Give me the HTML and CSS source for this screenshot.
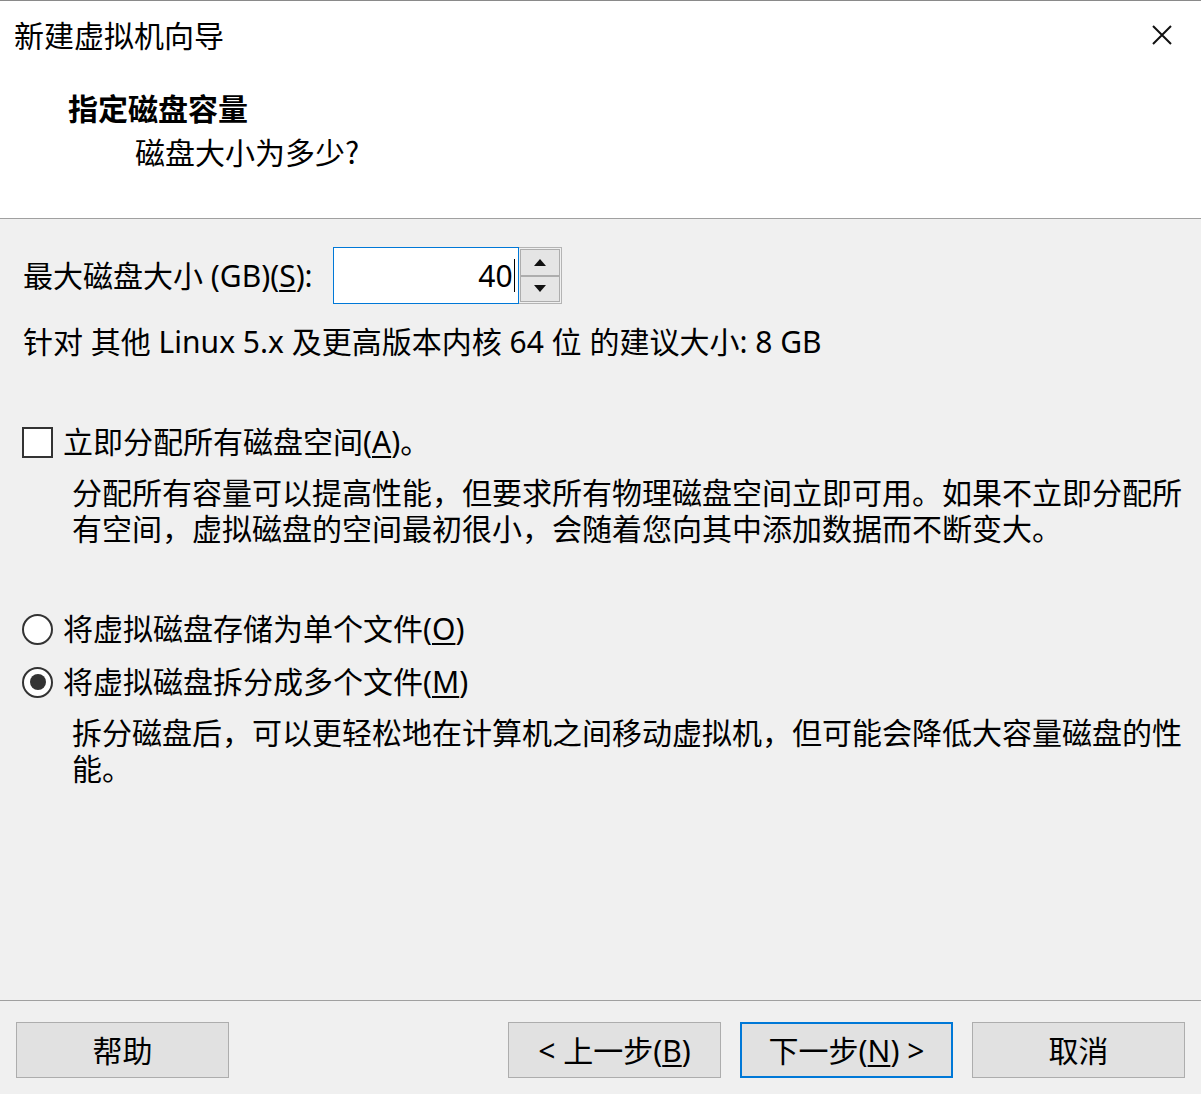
FILE: index.html
```html
<!DOCTYPE html>
<html lang="zh-CN">
<head>
<meta charset="utf-8">
<title>新建虚拟机向导</title>
<link rel="stylesheet" href="styles.css">
</head>
<body>
<div class="window">
  <div class="header">
    <div class="titlebar">
      <div class="title">新建虚拟机向导</div>
      <div class="close">
        <svg width="22" height="22" viewBox="0 0 22 22"><path d="M2 2 L20 20 M20 2 L2 20" stroke="#111" stroke-width="2" fill="none"/></svg>
      </div>
    </div>
    <div class="heading">指定磁盘容量</div>
    <div class="subheading">磁盘大小为多少?</div>
  </div>

  <div class="content">
    <div class="size-row">
      <span class="label">最大磁盘大小 (GB)(<u>S</u>):</span>
      <div class="spinbox">
        <div class="spin-input"><span class="value">40</span><span class="caret"></span></div>
        <div class="spin-buttons">
          <div class="spin-btn"><svg width="12" height="7" viewBox="0 0 12 7"><path d="M0 7 L6 0 L12 7 Z" fill="#111"/></svg></div>
          <div class="spin-btn"><svg width="12" height="7" viewBox="0 0 12 7"><path d="M0 0 L6 7 L12 0 Z" fill="#111"/></svg></div>
        </div>
      </div>
    </div>
    <div class="recommend">针对 其他 Linux 5.x 及更高版本内核 64 位 的建议大小: 8 GB</div>

    <div class="option check-row">
      <span class="checkbox"></span>
      <span class="opt-label">立即分配所有磁盘空间(<u>A</u>)。</span>
    </div>
    <div class="desc">分配所有容量可以提高性能，但要求所有物理磁盘空间立即可用。如果不立即分配所有空间，虚拟磁盘的空间最初很小，会随着您向其中添加数据而不断变大。</div>

    <div class="option radio-row-1">
      <span class="radio"></span>
      <span class="opt-label">将虚拟磁盘存储为单个文件(<u>O</u>)</span>
    </div>
    <div class="option radio-row-2">
      <span class="radio checked"></span>
      <span class="opt-label">将虚拟磁盘拆分成多个文件(<u>M</u>)</span>
    </div>
    <div class="desc">拆分磁盘后，可以更轻松地在计算机之间移动虚拟机，但可能会降低大容量磁盘的性能。</div>
  </div>

  <div class="footer">
    <button class="btn">帮助</button>
    <div class="spacer"></div>
    <button class="btn">&lt; 上一步(<u>B</u>)</button>
    <button class="btn default">下一步(<u>N</u>) &gt;</button>
    <button class="btn">取消</button>
  </div>
</div>
</body>
</html>
```

FILE: styles.css
```css
* { box-sizing: border-box; }
html, body {
  margin: 0;
  padding: 0;
  background: #f0f0f0;
}
body {
  font-family: "Noto Sans", "Noto Sans CJK SC", sans-serif;
  font-size: 30px;
  color: #000;
  width: 1201px;
  height: 1094px;
  overflow: hidden;
}
.window {
  display: flex;
  flex-direction: column;
  height: 1094px;
}
.header {
  background: #fff;
  border-top: 1px solid #8a8a8a;
  border-bottom: 1px solid #a0a0a0;
  height: 219px;
  padding-top: 13px;
}
.titlebar {
  display: flex;
  align-items: center;
  justify-content: space-between;
  height: 40px;
  padding-left: 14px;
  padding-right: 28px;
}
.title {
  line-height: 40px;
  font-family: "Noto Sans CJK SC", sans-serif;
}
.close {
  display: flex;
  width: 22px;
  height: 22px;
  margin-top: 2px;
}
.heading {
  font-weight: bold;
  font-family: "Noto Sans CJK SC", sans-serif;
  margin-top: 31px;
  padding-left: 68px;
  line-height: 44px;
}
.subheading {
  font-family: "Noto Sans CJK SC", sans-serif;
  padding-left: 135px;
  line-height: 44px;
}
.content {
  flex: 1;
  border-bottom: 1px solid #a0a0a0;
  padding-left: 22px;
  padding-top: 28px;
}
.size-row {
  display: flex;
  align-items: center;
  height: 57px;
  padding-left: 1px;
}
.label {
  line-height: 40px;
}
.spinbox {
  display: flex;
  margin-left: 20px;
  height: 57px;
}
.spin-input {
  width: 186px;
  height: 57px;
  background: #fff;
  border: 1px solid #0078d7;
  display: flex;
  align-items: center;
  justify-content: flex-end;
  padding-right: 3px;
}
.value {
  line-height: 40px;
}
.caret {
  width: 1px;
  height: 33px;
  background: #000;
  margin-left: 1px;
}
.spin-buttons {
  width: 43px;
  border: 1px solid #b4b4b4;
  border-left: none;
  display: flex;
  flex-direction: column;
  background: #f0f0f0;
  padding: 1px;
}
.spin-btn {
  flex: 1;
  background: #e5e5e5;
  border: 1px solid #adadad;
  display: flex;
  align-items: center;
  justify-content: center;
}
.recommend {
  margin-top: 18px;
  line-height: 40px;
  padding-left: 1px;
}
.option {
  display: flex;
  align-items: center;
  height: 40px;
}
.check-row { margin-top: 60px; }
.radio-row-1 { margin-top: 62px; }
.radio-row-2 { margin-top: 13px; }
.checkbox {
  width: 31px;
  height: 31px;
  border: 2px solid #333;
  background: #fff;
  flex: none;
}
.radio {
  width: 31px;
  height: 31px;
  border: 2px solid #333;
  border-radius: 50%;
  background: #fff;
  flex: none;
  display: flex;
  align-items: center;
  justify-content: center;
}
.radio.checked::after {
  content: "";
  width: 16px;
  height: 16px;
  border-radius: 50%;
  background: #333;
}
.opt-label {
  margin-left: 10px;
  line-height: 40px;
}
.desc {
  margin-top: 13px;
  padding-left: 50px;
  padding-right: 18px;
  line-height: 36px;
}
.footer {
  height: 93px;
  display: flex;
  align-items: flex-start;
  padding: 21px 16px 0 16px;
  gap: 19px;
}
.spacer { flex: 1; }
.btn {
  width: 213px;
  height: 56px;
  background: #e1e1e1;
  border: 1px solid #adadad;
  font-family: "Noto Sans", "Noto Sans CJK SC", sans-serif;
  font-size: 30px;
  color: #000;
  padding: 2px 0 0 0;
  margin: 0;
  line-height: 40px;
}
.btn.default {
  border: 2px solid #0078d7;
}
u {
  text-decoration-thickness: 2px;
  text-underline-offset: 3px;
}
```
